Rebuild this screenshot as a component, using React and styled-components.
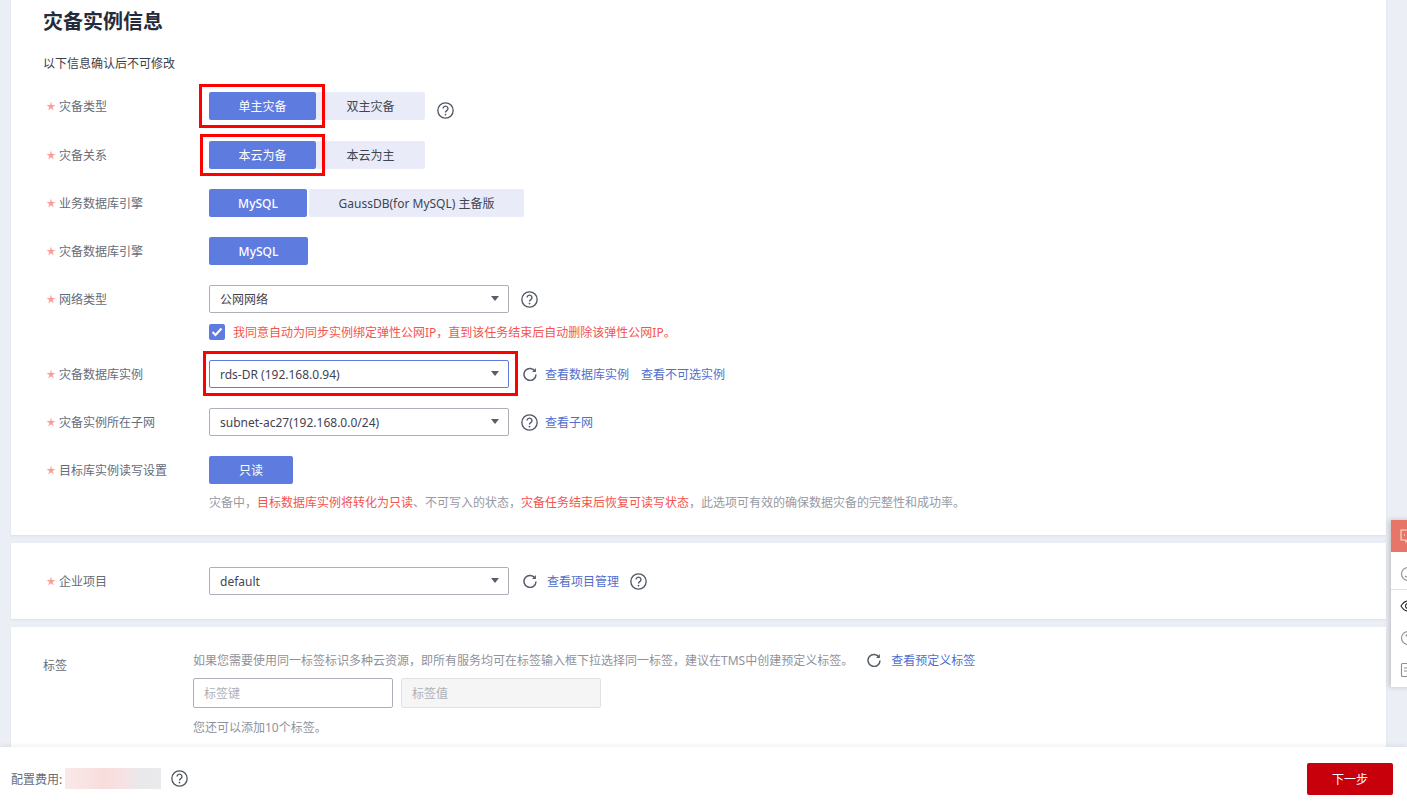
import React from "react"
import styled, { createGlobalStyle } from "styled-components"

const GlobalStyle = createGlobalStyle`
  html, body {
    margin: 0;
    padding: 0;
    background: #eceef5;
  }
  body {
    font-family: "Noto Sans", "Noto Sans CJK SC", sans-serif;
    font-size: 12px;
    color: #666b78;
  }
  * {
    box-sizing: border-box;
  }
`

const HelpIcon = ({ size = 17 }) => (
  <svg width={size} height={size} viewBox="0 0 16 16" fill="none" stroke="#505664">
    <circle cx="8" cy="8" r="7.2" strokeWidth="1.25" />
    <path d="M5.7 6.2a2.3 2.3 0 1 1 3.500 2c-.8.500-1.200.900-1.200 1.700" strokeWidth="1.3" />
    <circle cx="8" cy="11.800" r=".85" fill="#505664" stroke="none" />
  </svg>
)

const RefreshIcon = () => (
  <svg width="14" height="14" viewBox="0 0 14 14" fill="none" stroke="#575d6c" strokeWidth="1.5">
    <path d="M12.200 4.400A6 6 0 1 0 13 7.400" />
    <path d="M12.900 1v3.900H9" fill="#575d6c" stroke="none" />
  </svg>
)

const StarIcon = () => (
  <svg width="10" height="10" viewBox="0 0 10 10" fill="#fb9d96">
    <polygon points="5,0.500 5.900,3.900 9.500,3.900 6.600,6 7.800,9.500 5,7.300 2.200,9.500 3.400,6 0.500,3.900 4.100,3.900" />
  </svg>
)

const Page = styled.div`
  position: relative;
  width: 1407px;
  height: 810px;
  overflow: hidden;
  display: flex;
  flex-direction: column;
  background: #eceef5;
`

const Main = styled.main`
  flex: 1;
  min-height: 0;
  overflow: hidden;
  padding: 0 21px 0 11px;
  display: flex;
  flex-direction: column;
  gap: 8px;
`

const Card = styled.section`
  flex: none;
  background: #fff;
  height: ${(p) => p.$height}px;
  padding: ${(p) => p.$top || 0}px 32px 0;
  box-shadow: 0 1px 2px rgba(0, 0, 0, 0.06);
`

const Title = styled.h2`
  margin: 0;
  font-size: 20px;
  line-height: 28px;
  font-weight: 700;
  color: #252b3a;
`

const Intro = styled.p`
  margin: 19px 0 19px;
  line-height: 18px;
  color: #3a3f4d;
`

const Form = styled.div`
  display: flex;
  flex-direction: column;
  gap: 20px;
`

const Row = styled.div`
  display: flex;
  align-items: flex-start;
  margin-bottom: ${(p) => p.$after || 0}px;
`

const Label = styled.div`
  flex: none;
  width: 166px;
  height: 28px;
  padding-left: 3px;
  display: flex;
  align-items: center;
  gap: 3px;
`

const Field = styled.div`
  flex: 1;
  min-width: 0;
`

const Controls = styled.div`
  display: flex;
  align-items: center;
  height: 28px;
`

const Option = styled.div`
  position: relative;
  flex: none;
  width: ${(p) => p.$width}px;
  height: 28px;
  margin-right: ${(p) => p.$gap || 0}px;
  display: flex;
  align-items: center;
  justify-content: center;
  border-radius: 2px;
  background: ${(p) => (p.$active ? "#5e7ce0" : "#e9ecf8")};
  color: ${(p) => (p.$active ? "#fff" : "#3f4451")};
  font-weight: ${(p) => (p.$strong ? 500 : 400)};
`

const Highlight = styled.div`
  position: absolute;
  z-index: 2;
  top: ${(p) => p.$top}px;
  left: ${(p) => p.$left}px;
  right: ${(p) => p.$right}px;
  bottom: ${(p) => p.$bottom}px;
  border: 3px solid #f00;
  pointer-events: none;
`

const Select = styled.div`
  position: relative;
  flex: none;
  width: 300px;
  height: 28px;
  padding-left: 10px;
  display: flex;
  align-items: center;
  background: #fff;
  color: #3f4451;
  border: 1px solid ${(p) => (p.$focus ? "#5e7ce0" : "#adb0b8")};
  border-radius: 2px;
  &::after {
    content: "";
    position: absolute;
    right: 9px;
    top: 10px;
    border-left: 4px solid transparent;
    border-right: 4px solid transparent;
    border-top: 5px solid #575d6c;
  }
`

const IconSlot = styled.span`
  flex: none;
  display: inline-flex;
  margin-left: ${(p) => p.$left || 0}px;
  margin-top: ${(p) => p.$down || 0}px;
`

const Link = styled.a`
  flex: none;
  margin-left: ${(p) => p.$left || 0}px;
  color: #526ecc;
  text-decoration: none;
`

const Agreement = styled.label`
  display: flex;
  align-items: center;
  gap: 8px;
  height: 16px;
  margin-top: 11px;
  color: #f4534e;
`

const Check = styled.span`
  flex: none;
  width: 16px;
  height: 16px;
  border-radius: 2px;
  background: #5e7ce0;
  display: flex;
  align-items: center;
  justify-content: center;
`

const Hint = styled.p`
  margin: 10px 0 0;
  line-height: 18px;
  color: #979aa3;
`

const Warn = styled.span`
  color: #f4534e;
`

const TagRow = styled.div`
  display: flex;
  align-items: flex-start;
`

const TagLabel = styled.div`
  flex: none;
  width: 150px;
  padding-top: 30px;
  line-height: 18px;
`

const TagHintLine = styled.div`
  display: flex;
  align-items: center;
  height: 18px;
  margin-top: 24px;
  color: #8f929c;
`

const TagInputs = styled.div`
  display: flex;
  gap: 8px;
  margin-top: 9px;
`

const TagInput = styled.div`
  width: 200px;
  height: 30px;
  padding-left: 10px;
  display: flex;
  align-items: center;
  border: 1px solid ${(p) => (p.$disabled ? "#dfe1e6" : "#adb0b8")};
  border-radius: 2px;
  background: ${(p) => (p.$disabled ? "#f5f5f6" : "#fff")};
  color: #adb0b8;
`

const TagNote = styled.div`
  margin-top: 11px;
  line-height: 18px;
  color: #8f929c;
`

const Footer = styled.footer`
  position: relative;
  flex: none;
  height: 63px;
  background: #fff;
  padding: 0 14px 0 11px;
  display: flex;
  align-items: center;
  box-shadow: 0 -2px 4px rgba(0, 0, 0, 0.06);
`

const FeeMask = styled.div`
  width: 96px;
  height: 21px;
  margin: 0 10px 0 3px;
  background: linear-gradient(90deg, #f9e9e9 0%, #f9dddd 40%, #f6e2e3 62%, #e9e9eb 78%, #e9eaec 100%);
`

const NextButton = styled.button`
  margin-left: auto;
  width: 86px;
  height: 32px;
  border: 0;
  border-radius: 2px;
  background: #c7000b;
  color: #fff;
  font: inherit;
`

const SideDock = styled.aside`
  position: absolute;
  top: 520px;
  left: 1391px;
  width: 40px;
  height: 167px;
  background: #fff;
  box-shadow: -2px 0 5px rgba(0, 0, 0, 0.18);
`

const DockHead = styled.div`
  height: 32px;
  background: #e8756a;
  padding: 8px 0 0 9px;
  margin-bottom: 6px;
`

const DockItem = styled.div`
  height: 32px;
  padding: 8px 0 0 9px;
  border-bottom: ${(p) => (p.$line ? "1px solid #dfe1e6" : "0")};
`

const DockGlyph = ({ stroke = "#8a8e99", children }) => (
  <svg width="16" height="16" viewBox="0 0 16 16" fill="none" stroke={stroke} strokeWidth="1.1">
    {children}
  </svg>
)

const App = () => {
  return (
    <Page>
      <GlobalStyle />
      <Main>
        <Card $height={535} $top={8}>
          <Title>灾备实例信息</Title>
          <Intro>以下信息确认后不可修改</Intro>
          <Form>
            <Row $after={1}>
              <Label><StarIcon />灾备类型</Label>
              <Field>
                <Controls>
                  <Option $active $width={107}>
                    单主灾备
                    <Highlight $top={-8} $left={-10} $right={-9} $bottom={-8} />
                  </Option>
                  <Option $width={109}>双主灾备</Option>
                  <IconSlot $left={12} $down={8}><HelpIcon /></IconSlot>
                </Controls>
              </Field>
            </Row>
            <Row>
              <Label><StarIcon />灾备关系</Label>
              <Field>
                <Controls>
                  <Option $active $width={107}>
                    本云为备
                    <Highlight $top={-7} $left={-9} $right={-9} $bottom={-7} />
                  </Option>
                  <Option $width={109}>本云为主</Option>
                </Controls>
              </Field>
            </Row>
            <Row>
              <Label><StarIcon />业务数据库引擎</Label>
              <Field>
                <Controls>
                  <Option $active $strong $width={98} $gap={2}>MySQL</Option>
                  <Option $width={215}>GaussDB(for MySQL) 主备版</Option>
                </Controls>
              </Field>
            </Row>
            <Row>
              <Label><StarIcon />灾备数据库引擎</Label>
              <Field>
                <Controls>
                  <Option $active $strong $width={99}>MySQL</Option>
                </Controls>
              </Field>
            </Row>
            <Row>
              <Label><StarIcon />网络类型</Label>
              <Field>
                <Controls>
                  <Select>公网网络</Select>
                  <IconSlot $left={12}><HelpIcon /></IconSlot>
                </Controls>
                <Agreement>
                  <Check>
                    <svg width="12" height="12" viewBox="0 0 12 12" fill="none" stroke="#fff" strokeWidth="2">
                      <path d="M1.500 6l3 3 6-6.500" />
                    </svg>
                  </Check>
                  我同意自动为同步实例绑定弹性公网IP，直到该任务结束后自动删除该弹性公网IP。
                </Agreement>
              </Field>
            </Row>
            <Row>
              <Label><StarIcon />灾备数据库实例</Label>
              <Field>
                <Controls>
                  <Select $focus>
                    rds-DR (192.168.0.94)
                    <Highlight $top={-10} $left={-7} $right={-10} $bottom={-9} />
                  </Select>
                  <IconSlot $left={14}><RefreshIcon /></IconSlot>
                  <Link $left={8}>查看数据库实例</Link>
                  <Link $left={12}>查看不可选实例</Link>
                </Controls>
              </Field>
            </Row>
            <Row>
              <Label><StarIcon />灾备实例所在子网</Label>
              <Field>
                <Controls>
                  <Select>subnet-ac27(192.168.0.0/24)</Select>
                  <IconSlot $left={12}><HelpIcon /></IconSlot>
                  <Link $left={7}>查看子网</Link>
                </Controls>
              </Field>
            </Row>
            <Row>
              <Label><StarIcon />目标库实例读写设置</Label>
              <Field>
                <Controls>
                  <Option $active $width={84}>只读</Option>
                </Controls>
                <Hint>
                  灾备中，<Warn>目标数据库实例将转化为只读</Warn>、不可写入的状态，<Warn>灾备任务结束后恢复可读写状态</Warn>，此选项可有效的确保数据灾备的完整性和成功率。
                </Hint>
              </Field>
            </Row>
          </Form>
        </Card>

        <Card $height={76} $top={24}>
          <Row>
            <Label><StarIcon />企业项目</Label>
            <Field>
              <Controls>
                <Select>default</Select>
                <IconSlot $left={14}><RefreshIcon /></IconSlot>
                <Link $left={10}>查看项目管理</Link>
                <IconSlot $left={11}><HelpIcon /></IconSlot>
              </Controls>
            </Field>
          </Row>
        </Card>

        <Card $height={130}>
          <TagRow>
            <TagLabel>标签</TagLabel>
            <Field>
              <TagHintLine>
                如果您需要使用同一标签标识多种云资源，即所有服务均可在标签输入框下拉选择同一标签，建议在TMS中创建预定义标签。
                <IconSlot $left={14}><RefreshIcon /></IconSlot>
                <Link $left={10}>查看预定义标签</Link>
              </TagHintLine>
              <TagInputs>
                <TagInput>标签键</TagInput>
                <TagInput $disabled>标签值</TagInput>
              </TagInputs>
              <TagNote>您还可以添加10个标签。</TagNote>
            </Field>
          </TagRow>
        </Card>
      </Main>

      <Footer>
        配置费用:
        <FeeMask />
        <HelpIcon />
        <NextButton>下一步</NextButton>
      </Footer>

      <SideDock>
        <DockHead>
          <DockGlyph stroke="#fbe3c8">
            <path d="M1 2h14v10H8l-2 2v-2H1z" />
            <path d="M4 7h1M7.500 7h1M11 7h1" strokeWidth="1.500" />
          </DockGlyph>
        </DockHead>
        <DockItem $line>
          <DockGlyph><circle cx="8" cy="8" r="6.500" /><path d="M5 10c1.500 1.500 4.500 1.500 6 0" /></DockGlyph>
        </DockItem>
        <DockItem>
          <DockGlyph stroke="#252b3a"><path d="M1 8c2-3.500 5-5 7-5s5 1.500 7 5c-2 3.500-5 5-7 5S3 11.500 1 8z" /><circle cx="8" cy="8" r="2.500" /></DockGlyph>
        </DockItem>
        <DockItem>
          <DockGlyph><circle cx="8" cy="8" r="6.500" /><path d="M6 6.500a2 2 0 1 1 3 1.700c-.7.400-1 .800-1 1.500" /></DockGlyph>
        </DockItem>
        <DockItem>
          <DockGlyph><rect x="1.500" y="1.500" width="13" height="13" rx="1" /><path d="M4 6h8M4 9h8" /></DockGlyph>
        </DockItem>
      </SideDock>
    </Page>
  )
}

export default App
